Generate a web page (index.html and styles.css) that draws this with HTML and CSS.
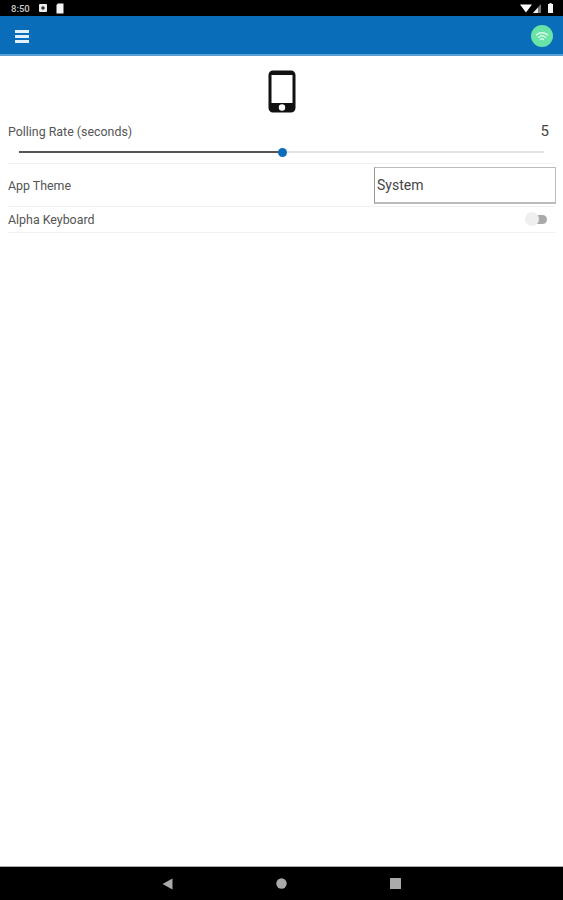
FILE: index.html
```html
<!DOCTYPE html>
<html lang="en">
<head>
    <meta charset="UTF-8">
    <meta name="viewport" content="width=device-width, initial-scale=1.0">
    <title>Settings</title>
    <link rel="stylesheet" href="styles.css">
</head>
<body>
    <!-- status bar -->
    <div class="status-bar">
        <div class="status-left">
            <span class="clock">8:50</span>
            <svg class="status-icon" width="10" height="10" viewBox="0 0 10 10"><rect x="1" y="1" width="8" height="8" rx="1" fill="#eee"/><circle cx="5" cy="5" r="1.8" fill="#333"/></svg>
            <svg class="status-icon" width="8" height="11" viewBox="0 0 8 11"><path d="M2 0.5H7.5V10.5H0.5V2Z" fill="#f4f4f4"/></svg>
        </div>
        <div class="status-right">
            <svg width="12" height="9" viewBox="0 0 12 9"><path d="M0 0.5H12L6 8.5Z" fill="#fff"/></svg>
            <svg width="8" height="9" viewBox="0 0 8 9"><path d="M8 0V9H0Z" fill="#777"/><path d="M5 3.5V9H0Z" fill="#eee"/></svg>
            <svg class="battery" width="5" height="10" viewBox="0 0 5 10"><path d="M1.5 0H3.5V1H5V10H0V1H1.5Z" fill="#f4f4f4"/></svg>
        </div>
    </div>

    <!-- header -->
    <header class="app-bar">
        <div class="menu-btn"><span></span><span></span><span></span></div>
        <div class="wifi-badge">
            <svg width="14" height="11" viewBox="0 0 16 13" fill="none" stroke="#d8fbe9" stroke-width="1.7" stroke-linecap="round">
                <path d="M1.5 4.6C5.2 1.1 10.8 1.1 14.5 4.6"/>
                <path d="M4 7.3C6.3 5.2 9.7 5.2 12 7.3"/>
                <path d="M6.4 9.9C7.4 9.1 8.6 9.1 9.6 9.9"/>
            </svg>
        </div>
    </header>

    <main class="content">
        <div class="device-icon">
            <svg width="28" height="43" viewBox="0 0 28 43">
                <path fill-rule="evenodd" fill="#111" d="M5 0.5H23C25.5 0.5 27.5 2.5 27.5 5V38C27.5 40.5 25.5 42.5 23 42.5H5C2.5 42.5 0.5 40.5 0.5 38V5C0.5 2.5 2.5 0.5 5 0.5ZM3.5 5V33H24.5V5Z"/>
                <circle cx="14" cy="37.5" r="3.2" fill="#fff"/>
            </svg>
        </div>

        <div class="polling">
            <div class="polling-head">
                <span class="label">Polling Rate (seconds)</span>
                <span class="value">5</span>
            </div>
            <div class="slider">
                <div class="slider-fill"></div>
                <div class="slider-thumb"></div>
            </div>
        </div>

        <div class="row row-theme">
            <span class="label">App Theme</span>
            <div class="select">System</div>
        </div>

        <div class="row row-alpha">
            <span class="label">Alpha Keyboard</span>
            <div class="toggle"><div class="toggle-knob"></div></div>
        </div>
    </main>

    <!-- nav bar -->
    <footer class="nav-bar">
        <svg width="11" height="12" viewBox="0 0 11 12"><path d="M0.5 6L10.5 0.5V11.5Z" fill="#aaa"/></svg>
        <svg width="11" height="11" viewBox="0 0 11 11"><circle cx="5.5" cy="5.5" r="5.2" fill="#aaa"/></svg>
        <svg width="11" height="11" viewBox="0 0 11 11"><rect width="11" height="11" rx="0.5" fill="#aaa"/></svg>
    </footer>
</body>
</html>
```

FILE: styles.css
```css
* { box-sizing: border-box; }
body {
    margin: 0;
    height: 900px;
    display: flex;
    flex-direction: column;
    overflow: hidden;
    background-color: #fff;
    font-family: Roboto, "Liberation Sans", sans-serif;
    color: #444;
}

/* status bar */
.status-bar {
    height: 16px;
    flex: none;
    display: flex;
    justify-content: space-between;
    align-items: center;
    padding: 0 10px 0 11px;
    background-color: #000;
}
.status-left { display: flex; align-items: center; }
.clock { font-size: 9.5px; font-weight: 500; color: #ccc; width: 27px; }
.status-icon { margin-right: 8px; }
.status-right { display: flex; align-items: center; gap: 1px; }
.battery { margin-left: 6px; }

/* header */
.app-bar {
    height: 40px;
    flex: none;
    display: flex;
    justify-content: space-between;
    align-items: center;
    padding: 2px 10px 0 15px;
    background-color: #0a6dba;
    border-bottom: 2px solid #5a9dd4;
}
.menu-btn { display: flex; flex-direction: column; gap: 2px; width: 14px; }
.menu-btn span { height: 3px; background-color: #e4f0f9; }
.wifi-badge {
    width: 22px;
    height: 22px;
    border-radius: 50%;
    display: flex;
    align-items: center;
    justify-content: center;
    background-color: #69e3a6;
}

/* settings */
.content { flex: 1; padding: 14px 8px 0; }
.device-icon { display: flex; justify-content: center; height: 43px; }
.label { font-size: 12.4px; color: #555; }
.polling { height: 51px; padding-top: 8px; border-bottom: 1px solid #f1f1f1; }
.polling-head {
    display: flex;
    justify-content: space-between;
    align-items: center;
    height: 20px;
    padding-right: 6px;
}
.value { font-size: 15px; color: #444; }
.slider {
    position: relative;
    height: 2px;
    margin: 10px 11px 0 11px;
    background-color: #e4e4e4;
}
.slider-fill { width: 263px; height: 100%; background-color: #555; }
.slider-thumb {
    position: absolute;
    left: 259px;
    top: -3px;
    width: 9px;
    height: 9px;
    border-radius: 50%;
    background-color: #0a6dba;
}
.row {
    display: flex;
    justify-content: space-between;
    align-items: center;
    border-bottom: 1px solid #f1f1f1;
}
.row-theme { height: 43px; }
.row-alpha { height: 26px; padding-right: 8px; }
.select {
    width: 182px;
    height: 37px;
    margin-right: -1px;
    padding-left: 2px;
    display: flex;
    align-items: center;
    font-size: 14px;
    color: #444;
    border: 1px solid #bbb;
    border-bottom-width: 2px;
    border-left-color: #999;
}

/* toggle is off */
.toggle {
    position: relative;
    width: 21px;
    height: 9px;
    border-radius: 5px;
    background-color: #aaa;
}
.toggle-knob {
    position: absolute;
    left: -1px;
    top: -3px;
    width: 14px;
    height: 14px;
    border-radius: 50%;
    background-color: #efefef;
}

/* nav bar */
.nav-bar {
    height: 34px;
    flex: none;
    display: flex;
    justify-content: center;
    align-items: center;
    gap: 103px;
    background-color: #000;
    border-top: 1px solid #aaa;
}
```
